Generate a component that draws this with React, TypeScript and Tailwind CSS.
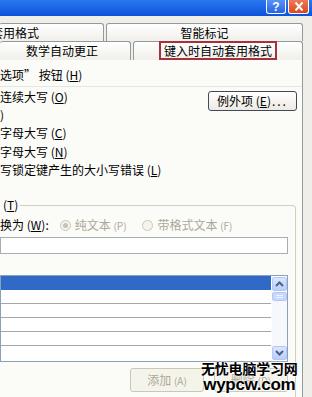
import React from "react";

function K({ c }: { c: string }) {
  return (
    <span>
      (<span className="underline underline-offset-[1px]">{c}</span>)
    </span>
  );
}

function Radio({ on }: { on?: boolean }) {
  return (
    <span className="w-[11px] h-[11px] rounded-full border border-[#cac8bb] bg-[#f4f3ee] flex items-center justify-center shrink-0">
      {on && <span className="w-[5px] h-[5px] rounded-full bg-[#c5c3b6]" />}
    </span>
  );
}

function Chevron({ down }: { down?: boolean }) {
  return (
    <svg width="9" height="6" viewBox="0 0 9 6" className={down ? "rotate-180" : ""}>
      <path d="M1 5 L4.5 1.5 L8 5" fill="none" stroke="#4d6185" strokeWidth="2" />
    </svg>
  );
}

const tab = "border-t border-l border-r border-[#919b9c] rounded-t-[3px] bg-gradient-to-b from-white to-[#f0efe9] leading-[17px]";

export default function App() {
  const rows = [0, 1, 2, 3, 4, 5];
  return (
    <div className="w-[312px] h-[397px] overflow-hidden relative bg-[#efeee8] text-[12px] text-black flex flex-col font-['Noto_Sans_CJK_SC','Noto_Sans',sans-serif]">
      {/* title bar */}
      <div className="h-[16px] shrink-0 bg-gradient-to-b from-[#2b78f0] to-[#0d52da] flex justify-end items-start pr-[3px] gap-[2px]">
        <div className="w-[20px] h-[14px] rounded-b-[3px] border border-t-0 border-white bg-gradient-to-b from-[#5a92f6] to-[#2563e4] flex items-center justify-center text-white font-bold text-[12px] leading-none font-['Liberation_Sans',sans-serif]">
          ?
        </div>
        <div className="w-[21px] h-[14px] rounded-b-[3px] border border-t-0 border-white bg-gradient-to-b from-[#ee7a55] to-[#d9461c] flex items-center justify-center">
          <svg width="10" height="9" viewBox="0 0 10 9">
            <path d="M1.5 0.5 L8.5 8.5 M8.5 0.5 L1.5 8.5" stroke="#fff" strokeWidth="2" />
          </svg>
        </div>
      </div>

      {/* back tab row */}
      <div className="mt-[7px] h-[18px] shrink-0 flex gap-[2px] pr-[9px]">
        <div className={`${tab} w-[105px] -ml-[1px] border-l-0 overflow-hidden`}>
          <span className="block -ml-[8px] whitespace-nowrap">套用格式</span>
        </div>
        <div className={`${tab} flex-1 text-center`}>智能标记</div>
      </div>
      {/* front tab row */}
      <div className="h-[19px] shrink-0 flex gap-[2px] pr-[9px]">
        <div className={`${tab} w-[131px] border-l-0 pl-[26px] leading-[18px]`}>数学自动更正</div>
        <div className={`${tab} flex-1 flex justify-center items-start`}>
          <span className="border-2 border-[#a8303c] px-[3px] h-[19px] leading-[15px] -mt-[1px]">
            键入时自动套用格式
          </span>
        </div>
      </div>

      {/* tab page */}
      <div className="flex-1 mr-[9px] bg-[#fbfbf8] border-r border-[#919b9c] flex flex-col">
        <div className="mt-[6px] h-[18px] leading-[18px] whitespace-nowrap">
          选项” 按钮 <K c="H" />
        </div>
        <div className="h-px mt-[2px] bg-[#e6e5de]" />
        <div className="mt-[1px] flex items-start">
          <div className="flex-1 flex flex-col leading-[18px] whitespace-nowrap">
            <div className="h-[18px]">
              连续大写 <K c="O" />
            </div>
            <div className="h-[18px]">)</div>
            <div className="h-[18px]">
              字母大写 <K c="C" />
            </div>
            <div className="h-[18px] mt-[1px]">
              字母大写 <K c="N" />
            </div>
            <div className="h-[18px]">
              写锁定键产生的大小写错误 <K c="L" />
            </div>
          </div>
          <div className="mt-[3px] mr-[5px] w-[89px] h-[20px] rounded-[3px] border border-[#3f4b5c] bg-gradient-to-b from-white to-[#eceae2] flex items-center justify-center leading-none whitespace-nowrap">
            <span>
              例外项 <K c="E" />
              <span className="tracking-[2px] ml-[1px]">...</span>
            </span>
          </div>
        </div>

        {/* group box */}
        <div className="mt-[26px] mr-[6px] flex-1 border-t border-r border-[#d0d0bf] rounded-tr-[4px] flex flex-col">
          <div className="-mt-[8px] h-[14px] leading-[14px] w-fit pl-[3px] pr-[2px] bg-[#fbfbf8]">
            <K c="T" />
          </div>
          <div className="mt-[6px] h-[14px] flex items-center whitespace-nowrap leading-[14px]">
            <span>
              换为 <K c="W" />:
            </span>
            <span className="ml-[11px]">
              <Radio on />
            </span>
            <span className="ml-[4px] text-[#aca899]">
              纯文本 <span className="text-[10px]">(P)</span>
            </span>
            <span className="ml-[15px]">
              <Radio />
            </span>
            <span className="ml-[5px] text-[#aca899]">
              带格式文本 <span className="text-[10px]">(F)</span>
            </span>
          </div>
          <div className="mt-[5px] mr-[7px] h-[17px] border border-[#a5acb5] bg-white" />

          {/* list */}
          <div className="mt-[21px] mr-[7px] h-[87px] border border-[#8aa0bb] bg-white flex gap-[1px]">
            <div className="flex-1 flex flex-col">
              {rows.map((r) => (
                <div
                  key={r}
                  className={
                    r === 0
                      ? "h-[14px] bg-[#3169c6]"
                      : r === 5
                      ? "h-[14px]"
                      : "h-[14px] border-b border-[#a7a7a7]"
                  }
                />
              ))}
            </div>
            <div className="w-[15px] flex flex-col py-[1px]">
              <div className="h-[14px] rounded-[2px] border border-[#b4c8f6] bg-gradient-to-b from-[#dbe6fe] to-[#b9cdfa] flex items-center justify-center">
                <Chevron />
              </div>
              <div className="mt-[1px] h-[9px] rounded-[2px] border border-[#b4c8f6] bg-[#c8d8fc] flex flex-col items-center justify-center gap-[1px]">
                <div className="w-[7px] h-px bg-[#eef3ff]" />
                <div className="w-[7px] h-px bg-[#eef3ff]" />
              </div>
              <div className="flex-1 bg-[#f7f8fc]" />
              <div className="h-[14px] rounded-[2px] border border-[#b4c8f6] bg-gradient-to-b from-[#dbe6fe] to-[#b9cdfa] flex items-center justify-center">
                <Chevron down />
              </div>
            </div>
          </div>

          <div className="mt-[6px] mr-[7px] flex justify-end gap-[10px]">
            <div className="w-[74px] h-[24px] rounded-[3px] border border-[#c9c7ba] bg-[#f5f4ea] text-[#aca899] flex items-center justify-center whitespace-nowrap">
              <span>
                添加 <span className="text-[10px]">(A)</span>
              </span>
            </div>
            <div className="w-[74px] h-[24px] rounded-[3px] border border-[#c9c7ba] bg-[#f5f4ea] text-[#aca899] flex items-center justify-center whitespace-nowrap">
              <span>
                删除 <span className="text-[10px]">(D)</span>
              </span>
            </div>
          </div>
        </div>
      </div>

      {/* site watermark */}
      <div className="absolute left-[201px] top-[360px] flex flex-col items-center font-bold text-black [text-shadow:0_0_2px_#fff,0_0_2px_#fff,0_0_1px_#fff]">
        <div className="text-[14px] leading-[17px] tracking-[-0.2px] whitespace-nowrap">无忧电脑学习网</div>
        <div className="text-[17px] leading-[15px] tracking-[-0.3px] font-['Liberation_Sans',sans-serif] whitespace-nowrap">
          wypcw.com
        </div>
      </div>
    </div>
  );
}
